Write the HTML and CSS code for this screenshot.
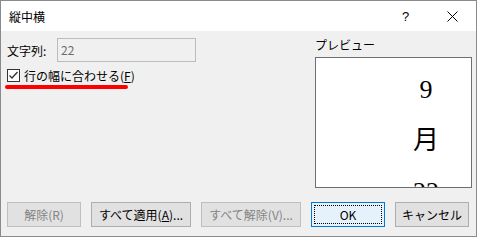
FILE: index.html
```html
<!DOCTYPE html>
<html lang="ja">
<head>
    <meta charset="UTF-8">
    <title>縦中横</title>
    <link rel="stylesheet" href="styles.css">
</head>
<body>
    <div class="dialog">
        <div class="titlebar">
            <span class="title">縦中横</span>
            <span class="help">?</span>
            <span class="close">
                <svg width="11" height="11" viewBox="0 0 11 11"><path d="M0.5 0.5 L10.5 10.5 M10.5 0.5 L0.5 10.5" stroke="#000" stroke-width="1"/></svg>
            </span>
        </div>
        <div class="body">
            <div class="main">
                <div class="left">
                    <div class="field">
                        <span class="label">文字列:</span>
                        <div class="input">22</div>
                    </div>
                    <div class="check">
                        <span class="box">
                            <svg width="11" height="11" viewBox="0 0 11 11"><path d="M1.5 5.5 L4 8 L9.5 2" fill="none" stroke="#333" stroke-width="1.3"/></svg>
                        </span>
                        <span>行の幅に合わせる(<u>F</u>)</span>
                    </div>
                    <div class="mark"></div>
                </div>
                <div class="right">
                    <div class="preview-label">プレビュー</div>
                    <div class="preview">
                        <div class="vtext">
                            <span>9</span>
                            <span>月</span>
                            <span>22</span>
                        </div>
                    </div>
                </div>
            </div>
            <div class="footer">
                <button class="btn" disabled>解除(R)</button>
                <button class="btn wide">すべて適用(<u>A</u>)...</button>
                <button class="btn wide" disabled>すべて解除(V)...</button>
                <button class="btn ok"><span>OK</span></button>
                <button class="btn">キャンセル</button>
            </div>
        </div>
    </div>
</body>
</html>
```

FILE: styles.css
```css
body {
    margin: 0;
    font-family: "Noto Sans CJK JP", "Noto Sans", sans-serif;
    font-size: 12px;
    color: #000;
}
.dialog {
    width: 477px;
    height: 237px;
    box-sizing: border-box;
    border: 1px solid #8a8a8a;
    display: flex;
    flex-direction: column;
}
.titlebar {
    height: 30px;
    background: #fff;
    display: flex;
    align-items: center;
    padding-left: 8px;
}
.title {
    flex: 1;
    font-size: 12px;
}
.help {
    width: 12px;
    margin-right: 33px;
    font-family: "Liberation Sans", sans-serif;
    font-size: 13px;
}
.close {
    display: flex;
    margin-right: 18px;
}
.body {
    flex: 1;
    background: #f0f0f0;
    display: flex;
    flex-direction: column;
    padding: 6px 4px 9px 6px;
}
.main {
    flex: 1;
    display: flex;
}
.left {
    flex: 1;
}
.field {
    display: flex;
    align-items: center;
    height: 24px;
    margin-top: 1px;
}
.label {
    width: 50px;
}
.input {
    width: 139px;
    height: 24px;
    box-sizing: border-box;
    border: 1px solid #bcbcbc;
    color: #6d6d6d;
    padding-left: 3px;
    line-height: 22px;
}
.check {
    display: flex;
    align-items: center;
    margin-top: 6px;
    height: 14px;
}
.check .box {
    width: 13px;
    height: 13px;
    box-sizing: border-box;
    border: 1px solid #333;
    background: #fff;
    display: flex;
    margin-right: 4px;
}
.mark {
    width: 123px;
    height: 4px;
    background: #ff0000;
    border-radius: 2px;
    margin: 3px 0 0 -2px;
}
.right {
    width: 157px;
}
.preview-label {
    height: 20px;
    line-height: 16px;
}
.preview {
    height: 131px;
    box-sizing: border-box;
    border: 1px solid #6e6e6e;
    background: #fff;
    overflow: hidden;
    display: flex;
    justify-content: flex-end;
    padding-right: 32px;
}
.vtext {
    display: flex;
    flex-direction: column;
    align-items: center;
    font-family: "Liberation Serif", "Noto Sans CJK JP", serif;
    font-size: 26px;
    line-height: 51px;
    margin-top: 6px;
}
.footer {
    display: flex;
    gap: 10px;
    height: 25px;
}
.btn {
    width: 74px;
    height: 25px;
    box-sizing: border-box;
    border: 1px solid #adadad;
    background: #e1e1e1;
    font-family: inherit;
    font-size: 12px;
    color: #000;
    padding: 0;
}
.btn.wide {
    width: 100px;
}
.btn:disabled {
    background: #e1e1e1;
    border-color: #bfbfbf;
    color: #838383;
}
.btn.ok {
    background: #e5f1fb;
    border-color: #0078d7;
    padding: 2px;
}
.btn.ok span {
    display: block;
    height: 100%;
    box-sizing: border-box;
    border: 1px dotted #000;
    line-height: 17px;
}
```
